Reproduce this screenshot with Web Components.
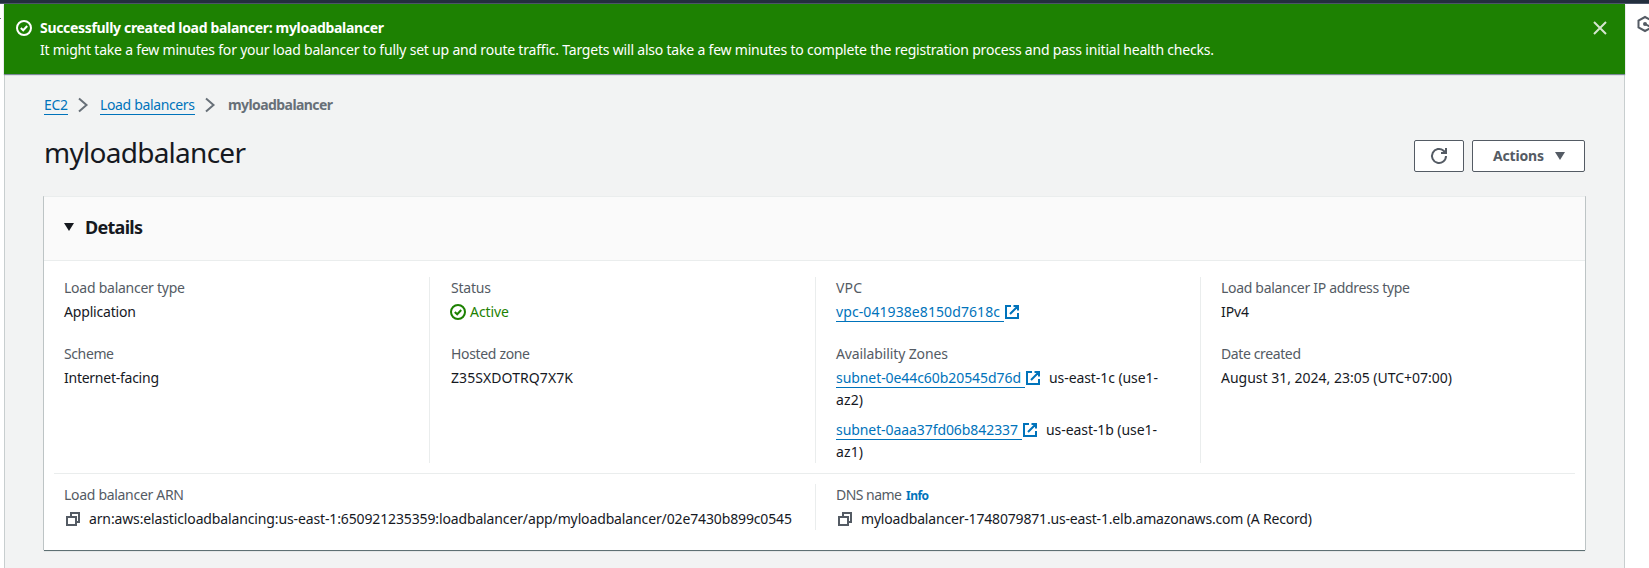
<!DOCTYPE html>
<html lang="en">
<head>
<meta charset="utf-8">
<title>Load balancer details</title>
<style>
html,body{margin:0;height:100%;overflow:hidden;background:#fff}
body{font:14px/22px "Noto Sans","Open Sans",sans-serif;color:#16191f}
</style>
</head>
<body>
<console-page></console-page>
<script>
const define=(name,html,setup)=>{
  const t=document.createElement('template');t.innerHTML=html;
  customElements.define(name,class extends HTMLElement{
    constructor(){super();this.attachShadow({mode:'open'}).append(t.content.cloneNode(true));}
    connectedCallback(){if(setup)setup(this,this.shadowRoot);}
  });
};

/* One-line text tracked to the width given in "w". */
define('fit-text',`<style>:host{display:inline-block;white-space:pre;vertical-align:baseline;flex:none}span{display:inline-block;white-space:pre}</style><span><slot></slot></span>`,
(el,root)=>{
  const w=parseFloat(el.getAttribute('w')),s=root.querySelector('span');
  const n=el.textContent.length;
  s.style.letterSpacing='0px';
  const nat=s.getBoundingClientRect().width;
  s.style.letterSpacing=((w-nat)/(n-1)).toFixed(4)+'px';
  el.style.width=w+'px';
});

const shapes={
  check:'<circle cx="8" cy="8" r="7"/><path d="M4.8 8l2.4 2.3 4-4.3"/>',
  close:'<path d="M2 2l12 12M14 2L2 14"/>',
  chevron:'<path d="M4 1.5L11.500 8 4 14.500"/>',
  refresh:'<path d="M15 8a7 7 0 1 1-2.400-5.300L15 5"/><path d="M15 0v5h-5"/>',
  external:'<path d="M7 2H2v12h12V9M9.5 2H14v4.500M13.500 2.500L6 10"/>',
  copy:'<path d="M2 6h9v8H2zM6 5.500V2h8v9h-2.500"/>',
  down:'<path d="M3 4h10L8 12z" fill="currentColor" stroke="none"/>',
  hex:'<path d="M8 1l6.500 3.500v7L8 15l-6.500-3.500v-7z"/><circle cx="8" cy="8" r="1" fill="currentColor"/><path d="M8 8l4.500 2.500"/>'
};
define('ui-icon',`<style>:host{display:inline-block;width:16px;height:16px;flex:none}svg{display:block;width:100%;height:100%;overflow:visible;fill:none;stroke:currentColor;stroke-width:2}</style><svg viewBox="0 0 16 16"></svg>`,
(el,root)=>{root.querySelector('svg').innerHTML=shapes[el.getAttribute('name')];});

define('ui-link',`<style>:host{display:inline-block;color:#0073bb;height:21px;border-bottom:1px solid #0073bb;box-sizing:border-box;line-height:22px;flex:none;padding-right:var(--tail,0)}</style><slot></slot>`);

define('flash-banner',`<style>
:host{display:flex;box-sizing:border-box;height:70px;padding:12px 17px 0 12px;background:#1d8102;color:#fff;box-shadow:0 1px 1px #7d8998;position:relative}
.txt{flex:1;margin:1px 0 0 8px}.t{font-weight:700}.t,.b{height:22px;white-space:nowrap}
ui-icon{margin-top:4px}.x{color:#d5e6d0;margin-top:4px}
</style><ui-icon name="check"></ui-icon><div class="txt"><div class="t"><slot name="title"></slot></div><div class="b"><slot></slot></div></div><ui-icon class="x" name="close"></ui-icon>`);

define('bread-crumbs',`<style>:host{display:flex;height:22px;color:#687078}.c{margin:3px 9px 0 7px}b{margin-left:1px;font-weight:700}</style>
<ui-link><fit-text w="24">EC2</fit-text></ui-link><ui-icon class="c" name="chevron"></ui-icon><ui-link><fit-text w="95">Load balancers</fit-text></ui-link><ui-icon class="c" name="chevron"></ui-icon><b><fit-text w="105">myloadbalancer</fit-text></b>`);

define('ui-button',`<style>:host{display:flex;box-sizing:border-box;height:32px;border:1px solid #545b64;border-radius:2px;background:#fff;color:#545b64;font-weight:700;align-items:center;justify-content:center}</style><slot></slot>`);

define('page-header',`<style>:host{display:flex;justify-content:space-between;height:40px}
h1{margin:-2px 0 0;font-size:28px;line-height:36px;font-weight:400}.a{display:flex;gap:8px;margin-top:4px}
.r{width:50px}.m{width:113px;gap:8px;padding-left:4px}</style>
<h1><fit-text w="202">myloadbalancer</fit-text></h1><div class="a"><ui-button class="r"><ui-icon name="refresh"></ui-icon></ui-button><ui-button class="m"><fit-text w="51">Actions</fit-text><ui-icon name="down"></ui-icon></ui-button></div>`);

define('key-value',`<style>:host{display:block;height:46px}:host(.tall){height:auto}.k{color:#545b64;height:22px;margin-bottom:2px;white-space:nowrap}.v{line-height:22px;white-space:nowrap}</style><div class="k"><slot name="k"></slot></div><div class="v"><slot></slot></div>`);

define('detail-column',`<style>:host{display:flex;flex-direction:column;gap:20px;box-sizing:border-box;padding-left:20px;border-left:1px solid #eaeded;min-width:0}:host([first]){border-left-color:transparent;padding-left:19px}:host([second]){padding-left:21px}</style><slot></slot>`);

define('detail-panel',`<style>
:host{display:block;box-sizing:border-box;height:354px;background:#fff;border-top:1px solid #eaeded;box-shadow:0 1px 1px rgba(0,28,36,.3),1px 0 0 #c8cecf,-1px 0 0 #c8cecf,0 1px 0 #879596}
header{display:flex;align-items:center;box-sizing:border-box;height:64px;padding:0 0 4px 17px;background:#fafafa;border-bottom:1px solid #eaeded;font-size:18px;font-weight:700}
header fit-text{margin-left:8px}
.main,.foot{display:grid;}
.main{grid-template-columns:385px 386px 385px 385px;margin-top:16px;height:186px}
.foot{grid-template-columns:771px 770px;height:46px;margin-top:10px}
hr{height:1px;border:0;background:#eaeded;margin:10px 10px 0}
.row{display:flex;align-items:center;height:22px}
.row ui-link{margin-top:-1px}
.ok{color:#1d8102}.ok ui-icon{margin:0 4px 0 -1px}
.ext{color:#0073bb}.cp{color:#545b64;margin:0 8px 0 1px}
ui-link{--tail:4px}
.gap{height:8px}
.info{font-size:12px;font-weight:700;color:#0073bb;margin-left:4px}
</style>
<header><ui-icon name="down"></ui-icon><fit-text w="58">Details</fit-text></header>
<div class="main">
<detail-column first>
 <key-value><fit-text slot="k" w="121">Load balancer type</fit-text><fit-text w="72">Application</fit-text></key-value>
 <key-value><fit-text slot="k" w="50">Scheme</fit-text><fit-text w="95">Internet-facing</fit-text></key-value>
</detail-column>
<detail-column second>
 <key-value><fit-text slot="k" w="40">Status</fit-text><div class="row ok"><ui-icon name="check"></ui-icon><fit-text w="39">Active</fit-text></div></key-value>
 <key-value><fit-text slot="k" w="79">Hosted zone</fit-text><fit-text w="122">Z35SXDOTRQ7X7K</fit-text></key-value>
</detail-column>
<detail-column>
 <key-value><fit-text slot="k" w="26">VPC</fit-text><div class="row"><ui-link><fit-text w="164">vpc-041938e8150d7618c</fit-text></ui-link><ui-icon class="ext" name="external"></ui-icon></div></key-value>
 <key-value class="tall"><fit-text slot="k" w="112">Availability Zones</fit-text>
  <div class="row"><ui-link><fit-text w="185">subnet-0e44c60b20545d76d</fit-text></ui-link><ui-icon class="ext" name="external"></ui-icon><fit-text style="margin-left:8px" w="109">us-east-1c (use1-</fit-text></div>
  <div class="row"><fit-text w="27">az2)</fit-text></div>
  <div class="gap"></div>
  <div class="row"><ui-link><fit-text w="182">subnet-0aaa37fd06b842337</fit-text></ui-link><ui-icon class="ext" name="external"></ui-icon><fit-text style="margin-left:8px" w="111">us-east-1b (use1-</fit-text></div>
  <div class="row"><fit-text w="27">az1)</fit-text></div>
 </key-value>
</detail-column>
<detail-column>
 <key-value><fit-text slot="k" w="189">Load balancer IP address type</fit-text><fit-text w="28">IPv4</fit-text></key-value>
 <key-value><fit-text slot="k" w="80">Date created</fit-text><fit-text w="231">August 31, 2024, 23:05 (UTC+07:00)</fit-text></key-value>
</detail-column>
</div>
<hr>
<div class="foot">
<detail-column first><key-value><fit-text slot="k" w="120">Load balancer ARN</fit-text><div class="row"><ui-icon class="cp" name="copy"></ui-icon><fit-text w="703">arn:aws:elasticloadbalancing:us-east-1:650921235359:loadbalancer/app/myloadbalancer/02e7430b899c0545</fit-text></div></key-value></detail-column>
<detail-column><key-value><span slot="k"><fit-text w="66">DNS name</fit-text><fit-text class="info" w="23">Info</fit-text></span><div class="row"><ui-icon class="cp" name="copy"></ui-icon><fit-text w="451">myloadbalancer-1748079871.us-east-1.elb.amazonaws.com (A Record)</fit-text></div></key-value></detail-column>
</div>`);

define('console-page',`<style>
:host{display:grid;grid-template-rows:4px 1fr;height:568px}
.top{background:#232f3e;border-bottom:1px solid #4b5568;box-sizing:border-box}
.cols{display:grid;grid-template-columns:4px 1621px 24px;overflow:hidden}
main{background:#f2f3f3;box-sizing:border-box;box-shadow:inset 1px 0 #c8cecf,inset -1px 0 #c8cecf}
.body{padding:20px 40px 0}
page-header,detail-panel{margin-top:20px}
.l i{display:block;width:1px;height:1px;background:#687078;margin-top:14px}
.r{color:#545b64;padding:12px 0 0 12px}
</style><div class="top"></div><div class="cols"><div class="l"><i></i></div><main>
<flash-banner><fit-text slot="title" w="344">Successfully created load balancer: myloadbalancer</fit-text><fit-text w="1174">It might take a few minutes for your load balancer to fully set up and route traffic. Targets will also take a few minutes to complete the registration process and pass initial health checks.</fit-text></flash-banner>
<div class="body"><bread-crumbs></bread-crumbs><page-header></page-header><detail-panel></detail-panel></div></main><div class="r"><ui-icon name="hex"></ui-icon></div></div>`);
</script>
</body>
</html>
